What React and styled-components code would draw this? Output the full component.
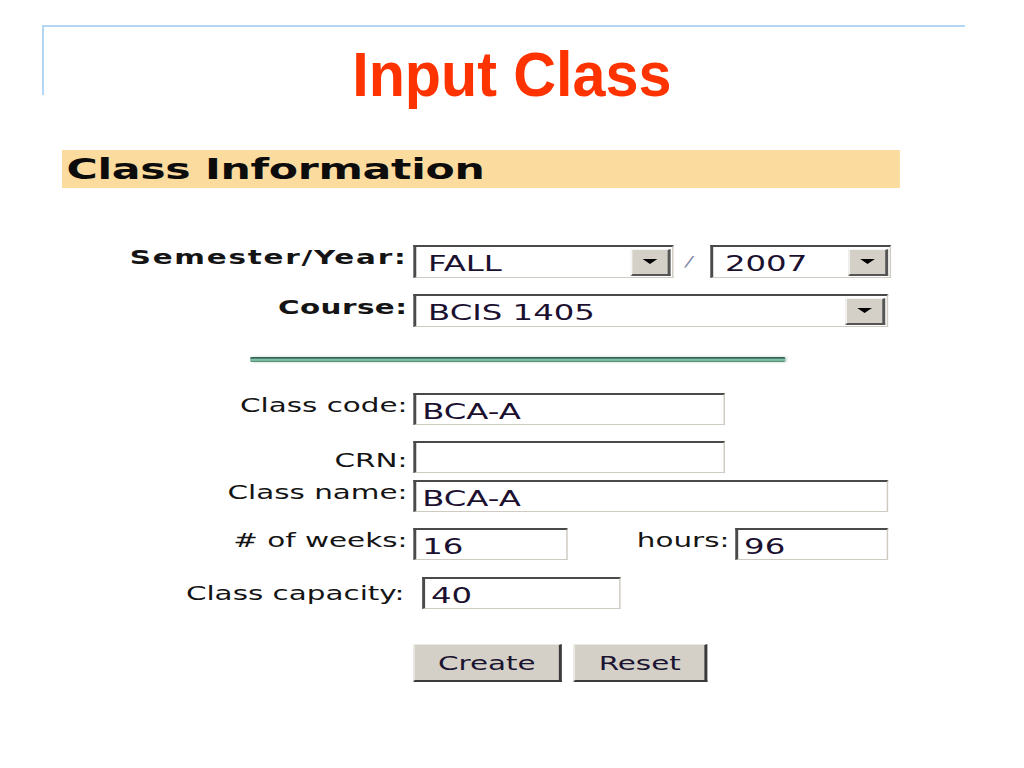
import styled, { createGlobalStyle } from "styled-components";

const GlobalStyle = createGlobalStyle`
  html, body {
    margin: 0;
    padding: 0;
    background: #ffffff;
  }
  * {
    box-sizing: border-box;
  }
`;

const Page = styled.div`
  width: 1024px;
  height: 768px;
  overflow: hidden;
  background: #ffffff;
  padding-top: 25px;
`;

const Frame = styled.div`
  margin: 0 59px 0 42px;
  height: 70px;
  border-top: 2px solid #b3d6f5;
  border-left: 2px solid #b3d6f5;
  text-align: center;
  padding-left: 15px;
`;

const Title = styled.h1`
  display: inline-block;
  margin: 0;
  padding-top: 16px;
  font-family: "Liberation Sans", Arial, sans-serif;
  font-weight: bold;
  font-size: 63px;
  line-height: 63px;
  color: #ff3300;
  transform: scaleX(0.94);
`;

/* the form is a screenshot stretched sideways on the slide */
const Panel = styled.div`
  width: 570px;
  margin: 55px 0 0 62px;
  transform: scaleX(1.47);
  transform-origin: 0 0;
  font-family: "DejaVu Sans", Verdana, sans-serif;
  color: #141414;
`;

const InfoBar = styled.div`
  height: 38px;
  line-height: 38px;
  background: #fcdb9f;
  padding-left: 3px;
  font-weight: bold;
  font-size: 29px;
  letter-spacing: -0.2px;
  color: #0c0c0c;
`;

const Row = styled.div`
  display: flex;
  align-items: flex-start;
  margin-top: ${(p) => p.$top}px;
`;

const Label = styled.div`
  width: ${(p) => p.$w || 235}px;
  flex-shrink: 0;
  text-align: right;
  font-size: 20px;
  line-height: 24px;
  font-weight: ${(p) => (p.$bold ? "bold" : "normal")};
  letter-spacing: ${(p) => p.$spacing || 0}px;
  padding-top: ${(p) => p.$drop || 0}px;
  white-space: nowrap;
`;

const Field = styled.div`
  width: ${(p) => p.$w}px;
  height: ${(p) => p.$h || 32}px;
  margin-left: ${(p) => p.$gap || 4}px;
  flex-shrink: 0;
  display: flex;
  align-items: center;
  background: #ffffff;
  border-style: solid;
  border-width: 2px 1px 1px 2px;
  border-color: #4a4a4a #cfcbc3 #cfcbc3 #4a4a4a;
  padding-left: ${(p) => p.$pad || 4}px;
  font-size: 22px;
  color: #1c1030;
`;

const Value = styled.span`
  flex: 1;
  padding-top: ${(p) => p.$drop || 0}px;
  white-space: nowrap;
`;

const DropButton = styled.div`
  width: 27px;
  height: 27px;
  margin-right: 1px;
  background: #d4d0c8;
  border-style: solid;
  border-width: 1px 2px 2px 1px;
  border-color: #f4f4f4 #555555 #555555 #f4f4f4;
  display: flex;
  align-items: center;
  justify-content: center;
`;

const Arrow = styled.span`
  width: 0;
  height: 0;
  border-left: 5px solid transparent;
  border-right: 5px solid transparent;
  border-top: 5px solid #000000;
`;

const Slash = styled.div`
  width: 21px;
  height: 33px;
  text-align: center;
  font-size: 14px;
  line-height: 33px;
  color: #7d89a3;
  font-style: italic;
`;

const Divider = styled.div`
  width: 364px;
  height: 5px;
  margin: 30px 0 0 128px;
  border-radius: 1px;
  background: linear-gradient(
    to bottom,
    #2f5f50 0%,
    #3d7463 25%,
    #8fd0b1 55%,
    #6aa88e 80%,
    #467d69 100%
  );
  box-shadow: 1px 0 2px rgba(60, 100, 90, 0.35);
`;

const Buttons = styled.div`
  display: flex;
  gap: 8px;
  margin: 35px 0 0 239px;
`;

const Button = styled.button`
  width: ${(p) => p.$w}px;
  height: 38px;
  padding: 0;
  background: #d4d0c8;
  border-style: solid;
  border-width: 1px 2px 2px 1px;
  border-color: #ecebe6 #3a3a3a #3a3a3a #ecebe6;
  font-family: "DejaVu Sans", Verdana, sans-serif;
  font-size: 20px;
  color: #1a1430;
  cursor: pointer;
`;

const Select = ({ w, value }) => (
  <Field $w={w} $h={33} $pad={8}>
    <Value $drop={2}>{value}</Value>
    <DropButton>
      <Arrow />
    </DropButton>
  </Field>
);

const Input = ({ w, value, gap }) => (
  <Field $w={w} $gap={gap}>
    <Value $drop={3}>{value}</Value>
  </Field>
);

const App = () => {
  return (
    <>
      <GlobalStyle />
      <Page>
        <Frame>
          <Title>Input Class</Title>
        </Frame>

        <Panel>
          <InfoBar>Class Information</InfoBar>

          <Row $top={57}>
            <Label $bold $spacing={1.2} $drop={0}>Semester/Year:</Label>
            <Select w={177} value="FALL" />
            <Slash>/</Slash>
            <Select w={123} value="2007" />
          </Row>

          <Row $top={16}>
            <Label $bold $spacing={0.3} $drop={1}>Course:</Label>
            <Select w={323} value="BCIS 1405" />
          </Row>

          <Divider />

          <Row $top={31}>
            <Label $drop={0}>Class code:</Label>
            <Input w={212} value="BCA-A" />
          </Row>

          <Row $top={16}>
            <Label $drop={7}>CRN:</Label>
            <Input w={212} value="" />
          </Row>

          <Row $top={7}>
            <Label $drop={-1}>Class name:</Label>
            <Input w={323} value="BCA-A" />
          </Row>

          <Row $top={16}>
            <Label $drop={-1}>{"# of weeks:"}</Label>
            <Input w={105} value="16" />
            <Label $w={110} $drop={-1}>hours:</Label>
            <Input w={104} value="96" />
          </Row>

          <Row $top={17}>
            <Label $w={233} $drop={4}>Class capacity:</Label>
            <Input w={135} value="40" gap={12} />
          </Row>

          <Buttons>
            <Button $w={101}>Create</Button>
            <Button $w={91}>Reset</Button>
          </Buttons>
        </Panel>
      </Page>
    </>
  );
};

export default App;
